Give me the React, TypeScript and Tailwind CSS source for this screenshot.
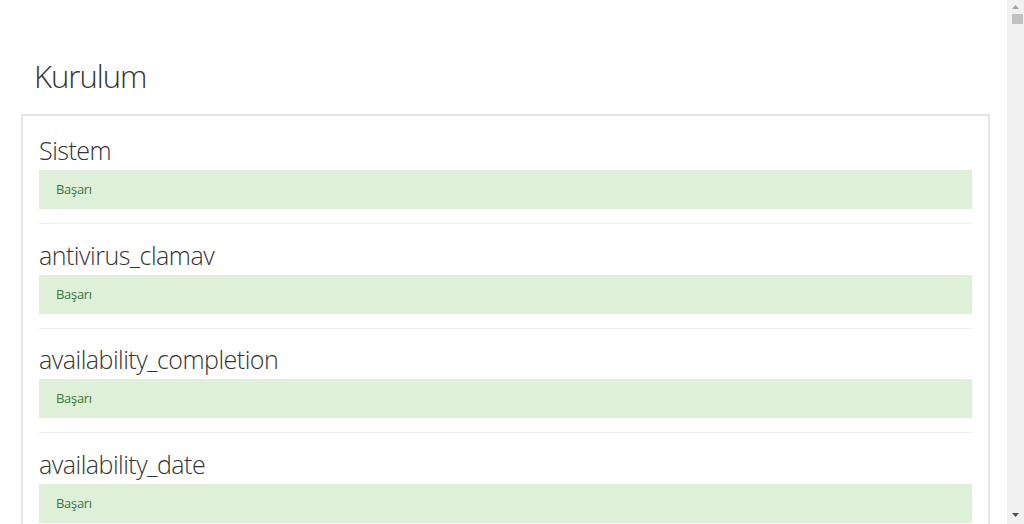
import React from 'react';

const plugins = ['Sistem', 'antivirus_clamav', 'availability_completion', 'availability_date'];

const Section: React.FC<{ name: string; first: boolean }> = ({ name, first }) => (
    <div>
        {!first && <hr className="border-0 border-t border-[#eeeeee] mb-[15.5px]" />}
        <h3 className="text-[25px] leading-[30px] font-light tracking-[-0.5px] text-[#333333] mb-[5px]">{name}</h3>
        <div className="h-[39px] px-[17px] bg-[#dff0d8] text-[#3c763d] text-[13px] leading-[39px] tracking-[-0.3px] mb-[14px]">
            Başarı
        </div>
    </div>
);

const Scrollbar: React.FC = () => (
    <div className="w-[17px] h-full bg-[#f1f1f1] flex flex-col items-center shrink-0">
        <svg width="9" height="9" viewBox="0 0 9 9" className="mt-[2px]">
            <path d="M1 7 L4.5 3 L8 7 Z" fill="#a3a3a3" />
        </svg>
        <div className="mt-[3px] w-[11px] ml-[4px] h-[10px] bg-[#c1c1c1]" />
        <div className="flex-1" />
        <svg width="9" height="9" viewBox="0 0 9 9" className="mb-[4px]">
            <path d="M1 2 L8 2 L4.5 6 Z" fill="#505050" />
        </svg>
    </div>
);

export default function App() {
    return (
        <div className="bg-white h-screen overflow-hidden flex font-['Open_Sans','Liberation_Sans',sans-serif] text-[#333333]">
            <div className="flex-1 min-w-0 h-full overflow-hidden">
                <div className="ml-[21px] mr-[17px] pt-[56px]">
                    <h2 className="ml-[13px] text-[31px] leading-[40px] font-light tracking-[-1px] text-[#333333] mb-[18px]">Kurulum</h2>
                    <div className="border-2 border-[#e6e6e6] px-[16px] pt-[19px] pb-2">
                        {plugins.map((p, i) => (
                            <Section key={p} name={p} first={i === 0} />
                        ))}
                    </div>
                </div>
            </div>
            <Scrollbar />
        </div>
    );
}
